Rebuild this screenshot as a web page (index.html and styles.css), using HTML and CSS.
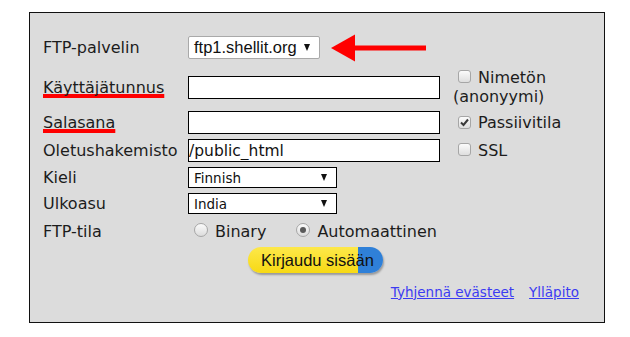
FILE: index.html
```html
<!DOCTYPE html>
<html lang="fi">
<head>
    <meta charset="UTF-8">
    <meta name="viewport" content="width=device-width, initial-scale=1.0">
    <link rel="stylesheet" href="styles.css">
    <title>FTP-kirjautuminen</title>
</head>
<body>

<div class="login-box">
    <form class="login-grid" onsubmit="return false">

        <div class="label">FTP-palvelin</div>
        <div class="field field-span">
            <div class="select select-server">
                <span>ftp1.shellit.org</span>
                <span class="caret"></span>
            </div>
            <svg class="pointer" width="96" height="28" viewBox="0 0 96 28">
                <polygon points="0,14 24,0.5 24,27.5" fill="#ff0000"/>
                <rect x="22" y="11.5" width="73" height="5" fill="#ff0000"/>
            </svg>
        </div>

        <div class="label"><span class="marked">Käyttäjätunnus</span></div>
        <div class="field"><input class="text-input" type="text" value=""></div>
        <div class="option"><span class="check"></span>Nimetön (anonyymi)</div>

        <div class="label"><span class="marked">Salasana</span></div>
        <div class="field"><input class="text-input" type="password" value=""></div>
        <div class="option">
            <span class="check">
                <svg width="11" height="11" viewBox="0 0 11 11"><path d="M2 5.5 L4.5 8 L9 2.5" fill="none" stroke="#3a3a3a" stroke-width="2"/></svg>
            </span>Passiivitila
        </div>

        <div class="label">Oletushakemisto</div>
        <div class="field"><input class="text-input" type="text" value="/public_html"></div>
        <div class="option"><span class="check"></span>SSL</div>

        <div class="label">Kieli</div>
        <div class="field field-span">
            <div class="select select-small"><span>Finnish</span><span class="caret"></span></div>
        </div>

        <div class="label">Ulkoasu</div>
        <div class="field field-span">
            <div class="select select-small"><span>India</span><span class="caret"></span></div>
        </div>

        <div class="label">FTP-tila</div>
        <div class="field field-span radios">
            <label class="radio-label"><span class="radio"></span>Binary</label>
            <label class="radio-label radio-second"><span class="radio radio-on"></span>Automaattinen</label>
        </div>

        <div class="button-row">
            <button class="login-button" type="submit">Kirjaudu sisään</button>
        </div>

        <div class="links">
            <a href="#">Tyhjennä evästeet</a>
            <a href="#">Ylläpito</a>
        </div>

    </form>
</div>

</body>
</html>
```

FILE: styles.css
```css
body {
    margin: 0;
    padding: 0;
    background: #ffffff;
    font-family: "DejaVu Sans", Verdana, sans-serif;
    color: #1c1c1c;
}

.login-box {
    box-sizing: border-box;
    width: 576px;
    margin: 12px 0 0 29px;
    padding: 15px 25px 12px 13px;
    background: #dcdcdc;
    border: 1px solid #111111;
}

.login-grid {
    display: grid;
    grid-template-columns: 145px 265px 1fr;
    grid-template-rows: 39px 40px 31px 25px 29px 23px 32px 26px 37px;
    align-items: center;
    margin: 0;
}

.label {
    font-size: 16px;
    line-height: 19px;
    white-space: nowrap;
}

.marked {
    text-decoration: underline;
    text-decoration-color: #ff0000;
    text-decoration-thickness: 4px;
    text-underline-offset: 1px;
    text-decoration-skip-ink: none;
}

.field {
    display: flex;
    align-items: center;
}

.field-span {
    grid-column: 2 / 4;
}

/* fake selects */
.select {
    box-sizing: border-box;
    display: flex;
    align-items: center;
    justify-content: space-between;
    background: #ffffff;
}

.select-server {
    width: 132px;
    height: 23px;
    padding: 0 9px 0 5px;
    border: 1px solid #a9a9a9;
    border-radius: 2px;
    font-family: "Liberation Sans", Arial, sans-serif;
    font-size: 16.5px;
    color: #111111;
}

.select-small {
    width: 149px;
    height: 21px;
    padding: 0 9px 0 5px;
    border: 1px solid #000000;
    font-size: 13.5px;
    color: #111111;
}

.caret {
    width: 0;
    height: 0;
    border-left: 3px solid transparent;
    border-right: 3px solid transparent;
    border-top: 7px solid #111111;
}

.pointer {
    margin-left: 11px;
}

.text-input {
    box-sizing: border-box;
    width: 252px;
    height: 23px;
    margin: 0;
    padding: 0 2px 0 0;
    border: 1px solid #000000;
    background: #ffffff;
    font-family: "DejaVu Sans", Verdana, sans-serif;
    font-size: 15.5px;
    color: #111111;
    outline: none;
}

/* checkboxes */
.option {
    font-size: 16px;
    line-height: 19px;
}

.check {
    box-sizing: border-box;
    display: inline-flex;
    align-items: center;
    justify-content: center;
    width: 13px;
    height: 13px;
    margin: 0 7px 0 5px;
    vertical-align: 0;
    border: 1px solid #a6a6a6;
    border-radius: 3px;
    background: linear-gradient(#fbfbfb, #dedede);
}

/* radios */
.radios {
    font-size: 16px;
    padding-left: 6px;
}

.radio-label {
    display: inline-flex;
    align-items: center;
    gap: 7px;
}

.radio-second {
    margin-left: 30px;
}

.radio {
    box-sizing: border-box;
    display: inline-flex;
    align-items: center;
    justify-content: center;
    width: 14px;
    height: 14px;
    margin-top: -2px;
    border: 1px solid #a6a6a6;
    border-radius: 50%;
    background: linear-gradient(#fbfbfb, #dcdcdc);
}

.radio-on::after {
    content: "";
    width: 6px;
    height: 6px;
    border-radius: 50%;
    background: #5a5a5a;
}

/* login button */
.button-row {
    grid-column: 1 / 4;
    display: flex;
    padding-left: 205px;
}

.login-button {
    box-sizing: border-box;
    width: 135px;
    height: 26px;
    padding: 0 0 0 13px;
    border: none;
    border-radius: 13px;
    text-align: left;
    font-family: "Liberation Sans", Arial, sans-serif;
    font-size: 16.5px;
    color: #111111;
    background:
        linear-gradient(to right, transparent 110px, #2f80d8 110px),
        linear-gradient(#fde84a, #f7d914);
    box-shadow: 1px 2px 2px rgba(0, 0, 0, 0.3);
}

.links {
    grid-column: 1 / 4;
    justify-self: end;
    display: flex;
    gap: 15px;
    font-size: 13.5px;
}

.links a {
    color: #3b3bf2;
}
```
